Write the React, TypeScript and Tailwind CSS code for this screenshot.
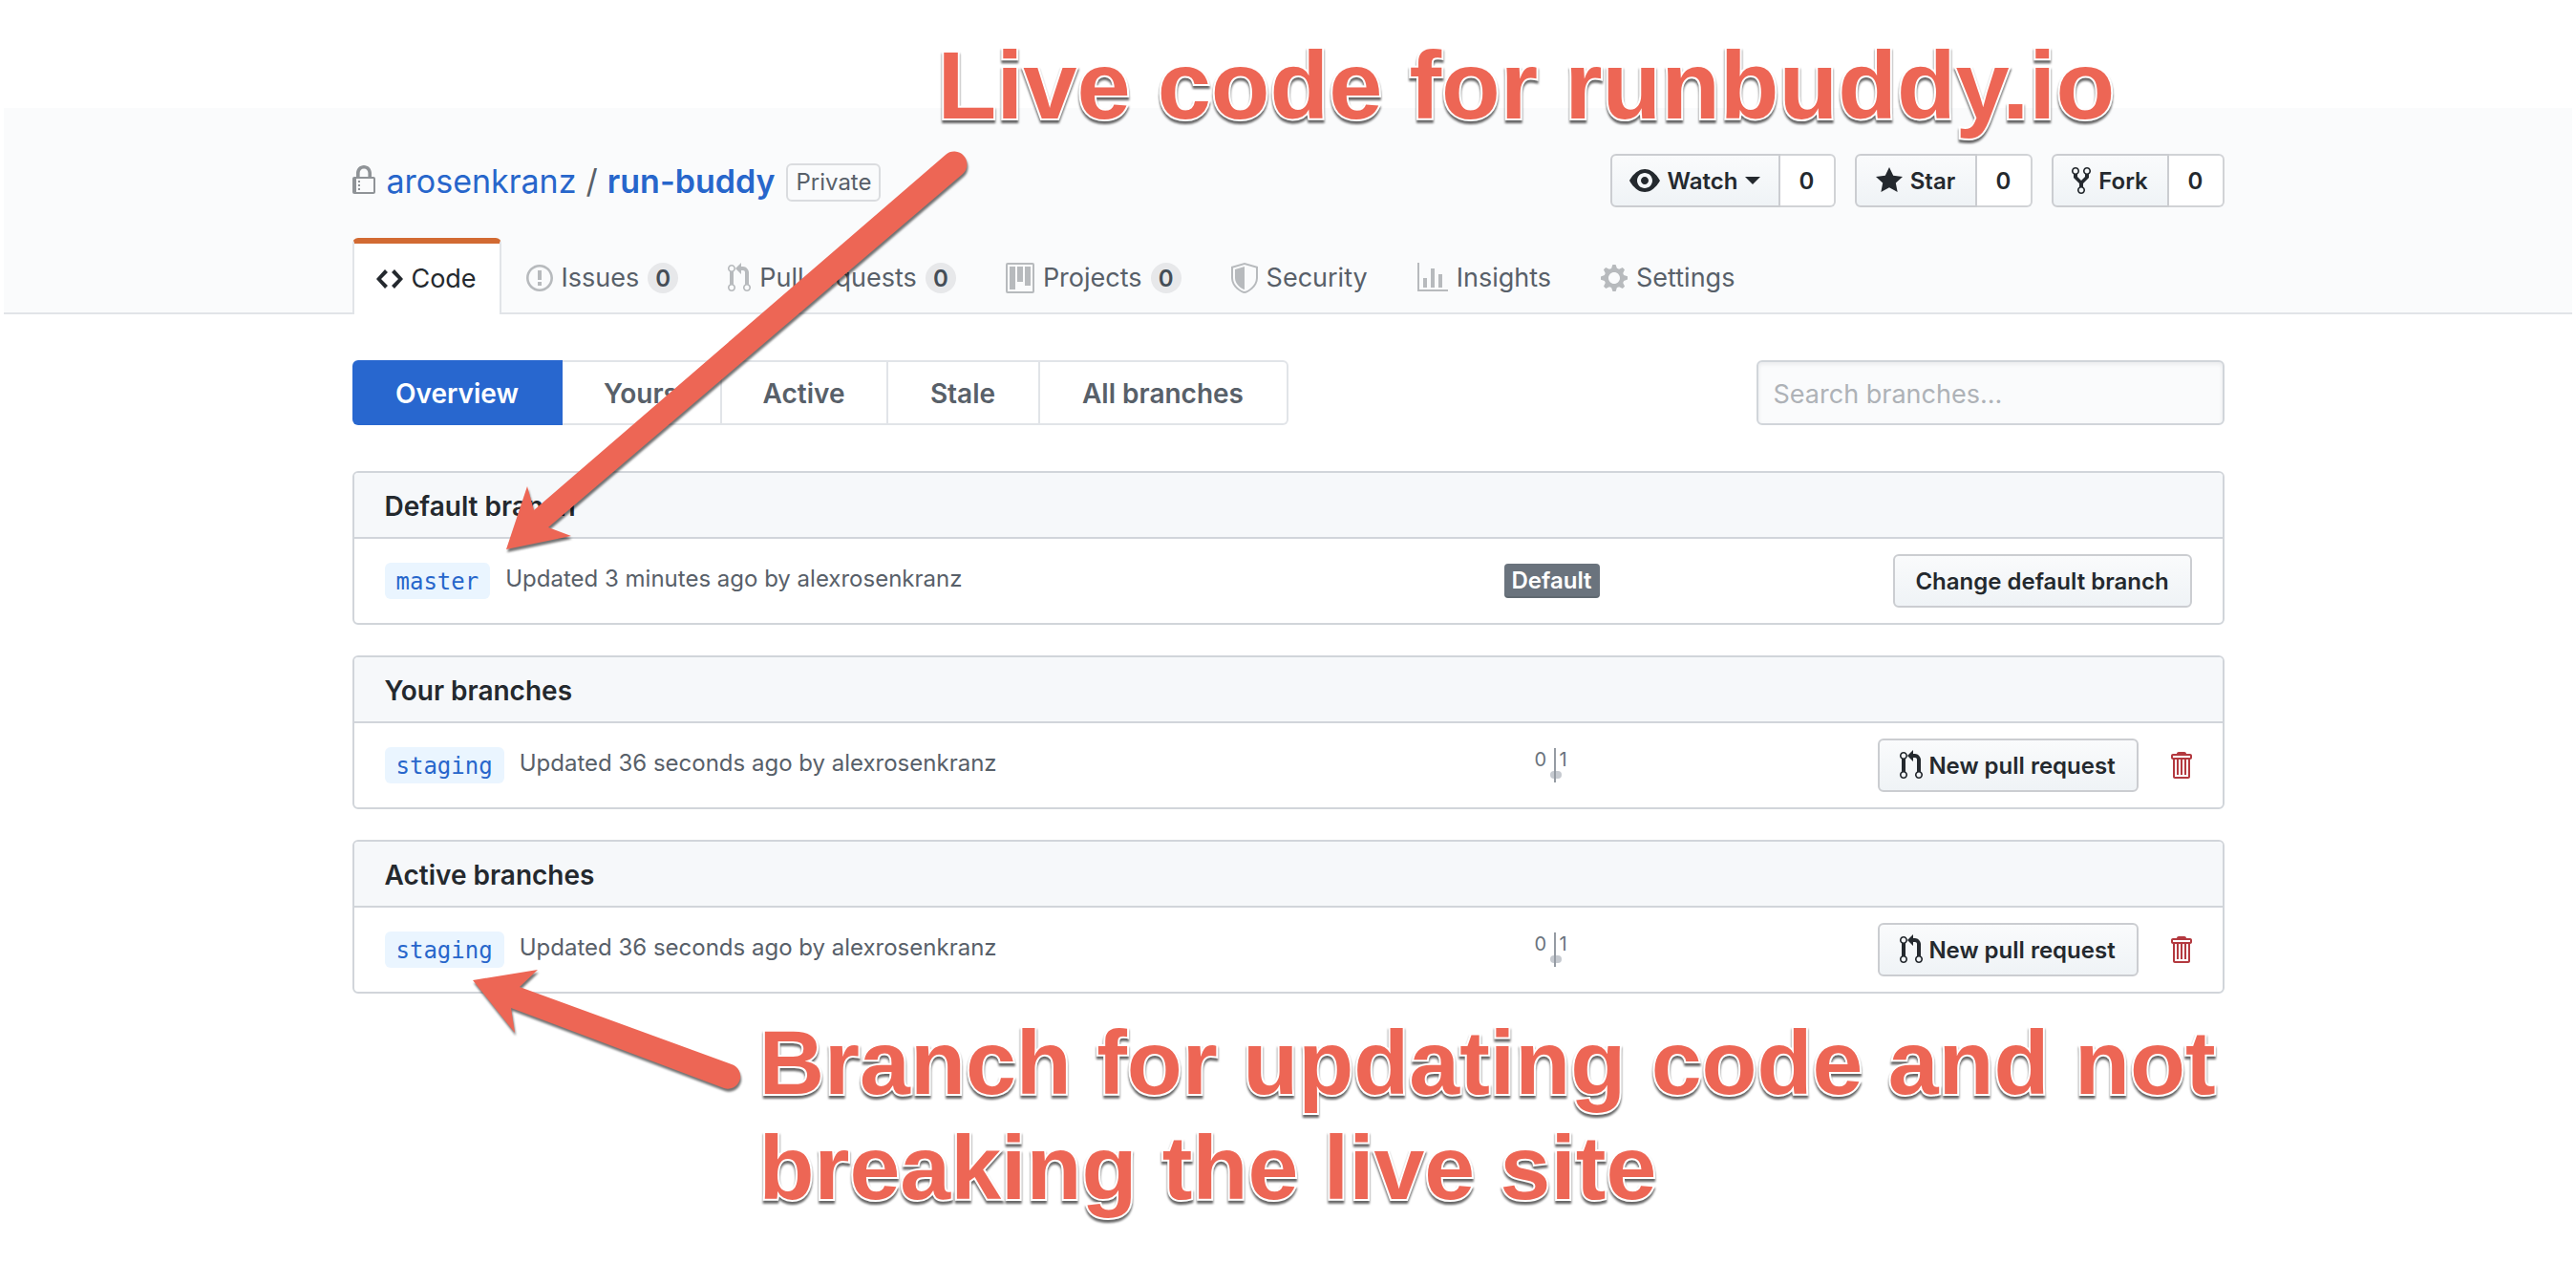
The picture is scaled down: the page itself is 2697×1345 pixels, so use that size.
import type { ReactNode } from "react";

type IconName = keyof typeof ICONS;

const ICONS = {
  lock: {
    w: 12,
    d: "M4 13H3v-1h1v1zm8-6v7c0 .55-.45 1-1 1H1c-.55 0-1-.45-1-1V7c0-.55.45-1 1-1h1V4c0-2.2 1.8-4 4-4s4 1.8 4 4v2h1c.55 0 1 .45 1 1zM3.8 6h4.41V4c0-1.22-.98-2.2-2.2-2.2-1.22 0-2.2.98-2.2 2.2v2H3.8zM11 7H2v7h9V7zM4 8H3v1h1V8zm0 2H3v1h1v-1z",
  },
  code: {
    w: 14,
    d: "M9.5 3L8 4.5 11.5 8 8 11.5 9.5 13 14 8 9.5 3zm-5 0L0 8l4.5 5L6 11.5 2.5 8 6 4.5 4.5 3z",
  },
  issue: {
    w: 14,
    d: "M7 2.3c3.14 0 5.7 2.56 5.7 5.7s-2.56 5.7-5.7 5.7A5.71 5.71 0 0 1 1.3 8c0-3.14 2.56-5.7 5.7-5.7zM7 1C3.14 1 0 4.14 0 8s3.14 7 7 7 7-3.14 7-7-3.14-7-7-7zm1 3H6v5h2V4zm0 6H6v2h2v-2z",
  },
  pull: {
    w: 12,
    d: "M11 11.28V5c-.03-.78-.34-1.47-.94-2.06C9.46 2.35 8.78 2.03 8 2H7V0L4 3l3 3V4h1c.27.02.48.11.69.31.21.2.3.42.31.69v6.28A1.993 1.993 0 0 0 10 15a1.993 1.993 0 0 0 1-3.72zm-1 2.92c-.66 0-1.2-.55-1.2-1.2 0-.65.55-1.2 1.2-1.2.65 0 1.2.55 1.2 1.2 0 .65-.55 1.2-1.2 1.2zM4 3c0-1.11-.89-2-2-2a1.993 1.993 0 0 0-1 3.72v6.56A1.993 1.993 0 0 0 2 15a1.993 1.993 0 0 0 1-3.72V4.72c.59-.34 1-.98 1-1.72zm-.8 10c0 .66-.55 1.2-1.2 1.2-.65 0-1.2-.55-1.2-1.2 0-.65.55-1.2 1.2-1.2.65 0 1.2.55 1.2 1.2zM2 4.2C1.34 4.2.8 3.65.8 3c0-.65.55-1.2 1.2-1.2.65 0 1.2.55 1.2 1.2 0 .65-.55 1.2-1.2 1.2z",
  },
  project: {
    w: 15,
    d: "M10 12h3V2h-3v10zm-4-2h3V2H6v8zm-4 4h3V2H2v12zm-1 1h13V1H1v14zM14 0H1a1 1 0 0 0-1 1v14a1 1 0 0 0 1 1h13a1 1 0 0 0 1-1V1a1 1 0 0 0-1-1z",
  },
  shield: {
    w: 14,
    d: "M0 2l7-2 7 2v6.02C14 12.69 8.69 16 7 16c-1.69 0-7-3.31-7-7.98V2zm1 .75L7 1l6 1.75v5.268C13 12.104 8.449 15 7 15c-1.449 0-6-2.896-6-6.982V2.75zm1 .75L7 2v12c-1.207 0-5-2.482-5-5.985V3.5z",
  },
  graph: {
    w: 16,
    d: "M16 14v1H0V0h1v14h15zM5 13H3V8h2v5zm4 0H7V3h2v10zm4 0h-2V6h2v7z",
  },
  gear: {
    w: 14,
    d: "M14 8.77v-1.6l-1.94-.64-.45-1.09.88-1.84-1.13-1.13-1.81.91-1.09-.45-.69-1.92h-1.6l-.63 1.94-1.11.45-1.84-.88-1.13 1.13.91 1.81-.45 1.09L0 7.23v1.59l1.94.64.45 1.09-.88 1.84 1.13 1.13 1.81-.91 1.09.45.69 1.92h1.59l.63-1.94 1.11-.45 1.84.88 1.13-1.13-.92-1.81.47-1.09L14 8.75v.02zM7 11c-1.66 0-3-1.34-3-3s1.34-3 3-3 3 1.34 3 3-1.34 3-3 3z",
  },
  eye: {
    w: 16,
    d: "M8.06 2C3 2 0 8 0 8s3 6 8.06 6C13 14 16 8 16 8s-3-6-7.94-6zM8 12c-2.2 0-4-1.78-4-4 0-2.2 1.8-4 4-4 2.22 0 4 1.8 4 4 0 2.22-1.78 4-4 4zm2-4c0 1.11-.89 2-2 2-1.11 0-2-.89-2-2 0-1.11.89-2 2-2 1.11 0 2 .89 2 2z",
  },
  star: {
    w: 14,
    d: "M14 6l-4.9-.64L7 1 4.9 5.36 0 6l3.6 3.26L2.67 14 7 11.67 11.33 14l-.93-4.74L14 6z",
  },
  fork: {
    w: 10,
    d: "M8 1a1.993 1.993 0 0 0-1 3.72V6L5 8 3 6V4.72A1.993 1.993 0 0 0 2 1a1.993 1.993 0 0 0-1 3.72V6.5l3 3v1.78A1.993 1.993 0 0 0 5 15a1.993 1.993 0 0 0 1-3.72V9.5l3-3V4.72A1.993 1.993 0 0 0 8 1zM2 4.2C1.34 4.2.8 3.65.8 3c0-.65.55-1.2 1.2-1.2.65 0 1.2.55 1.2 1.2 0 .65-.55 1.2-1.2 1.2zm3 10c-.66 0-1.2-.55-1.2-1.2 0-.65.55-1.2 1.2-1.2.65 0 1.2.55 1.2 1.2 0 .65-.55 1.2-1.2 1.2zm3-10c-.66 0-1.2-.55-1.2-1.2 0-.65.55-1.2 1.2-1.2.65 0 1.2.55 1.2 1.2 0 .65-.55 1.2-1.2 1.2z",
  },
  trash: {
    w: 12,
    d: "M11 2H9c0-.55-.45-1-1-1H5c-.55 0-1 .45-1 1H2c-.55 0-1 .45-1 1v1c0 .55.45 1 1 1v9c0 .55.45 1 1 1h7c.55 0 1-.45 1-1V5c.55 0 1-.45 1-1V3c0-.55-.45-1-1-1zm-1 12H3V5h1v8h1V5h1v8h1V5h1v8h1V5h1v9zm1-10H2V3h9v1z",
  },
};

function Octicon({ name, className = "" }: { name: IconName; className?: string }) {
  const { w, d } = ICONS[name];
  return (
    <svg
      aria-hidden="true"
      width={w * 2}
      height={32}
      viewBox={`0 0 ${w} 16`}
      fill="currentColor"
      fillRule="evenodd"
      className={`shrink-0 ${className}`}
    >
      <path d={d} />
    </svg>
  );
}

const BUTTON =
  "flex h-14 items-center justify-center border-2 border-[#cbcdd1] bg-linear-to-b from-[#fafbfc] to-[#eff3f6] text-2xl font-semibold text-[#24292e]";

function SocialButton({
  icon,
  label,
  caret,
  className,
}: {
  icon: IconName;
  label: string;
  caret?: boolean;
  className: string;
}) {
  return (
    <li className="flex">
      <button type="button" className={`${BUTTON} gap-2 rounded-l-md ${className}`}>
        <Octicon name={icon} />
        <span className="pt-0.5">{label}</span>
        {caret && <span className="border-x-8 border-t-8 border-x-transparent border-t-[#24292e]" />}
      </button>
      <a
        href="#count"
        className="flex h-14 w-[58px] items-center justify-center rounded-r-md border-2 border-l-0 border-[#d1d3d6] bg-white pt-0.5 text-2xl font-semibold text-[#24292e]"
      >
        0
      </a>
    </li>
  );
}

const TABS: { icon: IconName; label: string; count?: number }[] = [
  { icon: "issue", label: "Issues", count: 0 },
  { icon: "pull", label: "Pull requests", count: 0 },
  { icon: "project", label: "Projects", count: 0 },
  { icon: "shield", label: "Security" },
  { icon: "graph", label: "Insights" },
  { icon: "gear", label: "Settings" },
];

function RepoHeader() {
  return (
    <header className="mx-1 mt-[113px] border-b-2 border-[#e1e4e8] bg-[#fafbfc] pt-12">
      <div className="mx-auto w-full max-w-[1960px]">
        <div className="flex h-14 items-center justify-between">
          <h1 className="flex items-center text-[34px] text-[#586069]">
            <Octicon name="lock" className="mr-3 text-[#8f9397]" />
            <a href="#owner" className="text-[#2766cb]">
              arosenkranz
            </a>
            <span className="mx-2.5">/</span>
            <a href="#repo" className="font-semibold text-[#2766cb]">
              run-buddy
            </a>
            <span className="mt-1 ml-3 rounded-md border-2 border-[#dadcdf] px-2 text-2xl leading-9">
              Private
            </span>
          </h1>
          <ul className="flex gap-5">
            <SocialButton icon="eye" label="Watch" caret className="w-[178px]" />
            <SocialButton icon="star" label="Star" className="w-[128px]" />
            <SocialButton icon="fork" label="Fork" className="w-[123px]" />
          </ul>
        </div>
        <nav aria-label="Repository" className="mt-8 -mb-[2px] flex">
          <a
            href="#code"
            aria-current="page"
            className="flex h-20 w-[156px] items-center justify-center gap-2 rounded-t-md border-x-2 border-t-6 border-x-[#e1e4e8] border-t-[#d26a32] bg-white text-[27px] text-[#24292e]"
          >
            <Octicon name="code" />
            Code
          </a>
          {TABS.map((tab) => (
            <a
              key={tab.label}
              href={`#${tab.label}`}
              className="flex h-20 items-center gap-[9px] px-[26px] pt-1 text-[27px] text-[#586069]"
            >
              <Octicon name={tab.icon} className="text-[#b7babd]" />
              {tab.label}
              {tab.count !== undefined && (
                <span className="flex h-8 w-8 items-center justify-center rounded-full bg-[#e7e8ea] pt-0.5 text-2xl font-semibold text-[#444d56]">
                  {tab.count}
                </span>
              )}
            </a>
          ))}
        </nav>
      </div>
    </header>
  );
}

function FilterBar() {
  const item =
    "flex h-full items-center justify-center border-r-2 border-[#e1e4e8] pt-0.5 text-[28px] font-semibold text-[#586069]";
  return (
    <div className="flex items-center justify-between">
      <nav aria-label="Branch filters" className="flex h-[68px]">
        <a
          href="#overview"
          aria-current="page"
          className="flex w-[220px] items-center justify-center rounded-l-md bg-[#2867cf] pt-0.5 text-[28px] font-semibold text-white"
        >
          Overview
        </a>
        <div className="flex rounded-r-md border-y-2 border-r-2 border-[#e1e4e8]">
          <a href="#yours" className={`${item} w-[167px]`}>
            Yours
          </a>
          <a href="#active" className={`${item} w-[174px]`}>
            Active
          </a>
          <a href="#stale" className={`${item} w-[159px]`}>
            Stale
          </a>
          <a
            href="#all"
            className="flex h-full w-[258px] items-center justify-center pt-0.5 text-[28px] font-semibold text-[#586069]"
          >
            All branches
          </a>
        </div>
      </nav>
      <input
        type="search"
        aria-label="Search branches"
        placeholder="Search branches..."
        className="h-[68px] w-[490px] rounded-md border-2 border-[#d1d5da] bg-[#fafbfc] px-4 pt-0.5 text-[27px] text-[#24292e] shadow-[inset_0_2px_4px_rgba(27,31,35,0.08)] placeholder:text-[#aeb2b7]"
      />
    </div>
  );
}

function BranchBox({
  title,
  branch,
  updated,
  status,
  actions,
}: {
  title: string;
  branch: string;
  updated: string;
  status: ReactNode;
  actions: ReactNode;
}) {
  return (
    <section className="overflow-hidden rounded-md border-2 border-[#d1d5da]">
      <h2 className="flex h-[69px] items-center border-b-2 border-[#d1d5da] bg-[#f6f8fa] px-8 pt-0.5 text-[28px] font-semibold text-[#24292e]">
        {title}
      </h2>
      <div className="flex h-[88px] items-center px-8">
        <div className="flex flex-1 items-center gap-4">
          <a
            href={`#${branch}`}
            className="rounded-md bg-[#eaf5ff] px-3 pt-0.5 font-['DejaVu_Sans_Mono',monospace] text-2xl leading-9 text-[#2766cb]"
          >
            {branch}
          </a>
          <span className="pb-1 text-2xl text-[#586069]">{updated}</span>
        </div>
        <div className="flex w-[120px] justify-center">{status}</div>
        <div className="flex w-[610px] items-center justify-end">{actions}</div>
      </div>
    </section>
  );
}

function Divergence() {
  return (
    <div className="relative flex text-xl text-[#6a737d]">
      <span className="absolute top-6 left-[18px] h-2 w-3 rounded-full bg-[#c6cad0]" />
      <span className="relative h-9 w-6 border-r-2 border-[#959ba3] pl-0.5 leading-6">0</span>
      <span className="w-4 pl-1 leading-6">1</span>
    </div>
  );
}

function PullRequestActions() {
  return (
    <>
      <button type="button" className={`${BUTTON} w-[273px] gap-1.5 rounded-md`}>
        <Octicon name="pull" />
        <span className="pt-0.5">New pull request</span>
      </button>
      <button type="button" aria-label="Delete branch" className="ml-8 text-[#b3393f]">
        <Octicon name="trash" />
      </button>
    </>
  );
}

const CAPTION =
  "absolute whitespace-nowrap font-['Liberation_Sans',Arial,sans-serif] font-bold text-[#ed6655] [paint-order:stroke_fill] [-webkit-text-stroke:4px_white] [filter:drop-shadow(0_3px_1px_rgba(0,0,0,0.6))]";

function Annotations() {
  return (
    <div className="pointer-events-none absolute inset-x-0 top-0 mx-auto w-full max-w-[1960px]">
      <svg
        aria-hidden="true"
        viewBox="369 0 700 1200"
        width={700}
        height={1200}
        fill="#ed6655"
        className="absolute top-0 left-0 [filter:drop-shadow(1px_3px_1px_rgba(0,0,0,0.55))]"
      >
        <path d="M530 575L552 509L559 534L990 162A13 13 0 0 1 1008 182L574 552L598 561Z" />
        <path d="M495 1026L563 1015L544 1033L766 1114A13 13 0 0 1 758 1139L535 1055L539 1081Z" />
      </svg>
      <p className={`${CAPTION} top-[31px] left-[613px] text-[101px] leading-[116px]`}>
        Live code for runbuddy.io
      </p>
      <p className={`${CAPTION} top-[1057px] left-[426px] text-[95px] leading-[110px]`}>
        Branch for updating code and not
        <br />
        breaking the live site
      </p>
    </div>
  );
}

export default function App() {
  return (
    <div className="relative flow-root min-h-screen bg-white font-[Inter,sans-serif]">
      <RepoHeader />
      <main className="mx-auto mt-12 flex w-full max-w-[1960px] flex-col">
        <FilterBar />
        <div className="mt-12 flex flex-col gap-8 pb-[305px]">
          <BranchBox
            title="Default branch"
            branch="master"
            updated="Updated 3 minutes ago by alexrosenkranz"
            status={
              <span className="rounded-sm bg-[#6a737d] px-2 text-2xl leading-9 font-semibold text-white shadow-[inset_0_-2px_0_rgba(27,31,35,0.12)]">
                Default
              </span>
            }
            actions={
              <button type="button" className={`${BUTTON} w-[313px] rounded-md`}>
                <span className="pt-0.5">Change default branch</span>
              </button>
            }
          />
          <BranchBox
            title="Your branches"
            branch="staging"
            updated="Updated 36 seconds ago by alexrosenkranz"
            status={<Divergence />}
            actions={<PullRequestActions />}
          />
          <BranchBox
            title="Active branches"
            branch="staging"
            updated="Updated 36 seconds ago by alexrosenkranz"
            status={<Divergence />}
            actions={<PullRequestActions />}
          />
        </div>
      </main>
      <Annotations />
    </div>
  );
}
